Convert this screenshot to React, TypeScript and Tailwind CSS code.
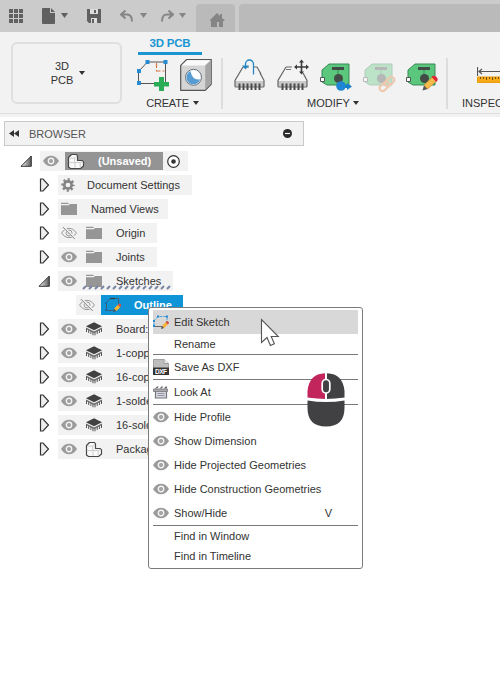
import React from "react";

type IconProps = { className?: string };

function Eye({ className = "" }: IconProps) {
  return (
    <svg className={`h-3 w-4 shrink-0 ${className}`} viewBox="0 0 16 12">
      <path d="M0 6C2 2.500 4.800.8 8 .8S14 2.500 16 6c-2 3.500-4.800 5.200-8 5.200S2 9.500 0 6Z" fill="#9b9b9b" />
      <circle cx="8" cy="6" r="2.700" fill="none" stroke="#f4f4f4" strokeWidth="1.400" />
      <circle cx="8" cy="6" r="1.500" fill="#a5a5a5" />
    </svg>
  );
}

function EyeOff({ className = "" }: IconProps) {
  return (
    <svg className={`h-3.5 w-4 shrink-0 ${className}`} viewBox="0 0 16 14" fill="none" stroke="#9a9a9a">
      <path d="M.6 7C2.600 3.900 5 2.400 8 2.400S13.400 3.900 15.400 7C13.400 10.100 11 11.600 8 11.600S2.600 10.100.6 7Z" />
      <circle cx="8" cy="7" r="3" />
      <circle cx="8" cy="7" r=".8" />
      <path d="m2.500 1 12 12" stroke="#f2f2f2" strokeWidth="2.200" />
      <path d="m1.800 1 12 12" stroke="#858585" />
    </svg>
  );
}

function Folder({ className = "" }: IconProps) {
  return (
    <svg className={`h-[14px] w-4 shrink-0 ${className}`} viewBox="0 0 16 14">
      <path d="M0 1.900V.7h7l1 1.200ZM0 3.200h7.500l1.600-1.300H16V13H0Z" fill="#969696" />
    </svg>
  );
}

function Gear() {
  return (
    <svg className="h-[14px] w-[14px] shrink-0" viewBox="0 0 14 14">
      <circle cx="7" cy="7" r="3.700" fill="none" stroke="#858585" strokeWidth="2.700" />
      <circle cx="7" cy="7" r="5.500" fill="none" stroke="#858585" strokeWidth="2.400" strokeDasharray="2.160 2.160" strokeDashoffset="1.080" />
    </svg>
  );
}

function Cubes() {
  return (
    <svg className="h-[17px] w-[18px] shrink-0" viewBox="0 0 18 17" strokeLinejoin="round">
      <path d="M1.500 4.500 4.500 1.500h5L10.500 3v4.500H15l1.500 1.500v4l-3 2.500h-10l-2-1.500Z" fill="#f9f9f9" stroke="#484848" strokeWidth="1.200" />
      <path d="M2.200 5.200H7.700L9.800 3M7.700 5.200v4.300M2.200 9.500h11M8 9.500v5.300M13.200 9.500v5M13.200 9.500l2.500-1" fill="none" stroke="#cccccc" />
    </svg>
  );
}

function Layers() {
  return (
    <svg className="h-[14px] w-[18px] shrink-0" viewBox="0 0 18 14">
      <path d="M1 4.200 9 .3l8 3.900-8 4Z" fill="#414141" />
      <path d="m1 5.500 8 3.900 8-3.900v1.400l-8 4-8-4Z" fill="#6b6b6b" />
      <path d="M1.500 7v3M3.700 8v3M5.900 9v3M8 10v3.300M10 10v3.300M12.200 9v3M14.400 8v3M16.500 7v3" stroke="#555" fill="none" />
    </svg>
  );
}

function Arrow({ open = false }: { open?: boolean }) {
  return open ? (
    <svg className="h-3 w-3 shrink-0" viewBox="0 0 12 12">
      <defs>
        <linearGradient id="open-arrow" x1="0" x2="1">
          <stop offset=".2" stopColor="#ddd" />
          <stop offset="1" stopColor="#555" />
        </linearGradient>
      </defs>
      <path d="M1 11.300 11.300 1v10.300Z" fill="url(#open-arrow)" stroke="#353535" />
    </svg>
  ) : (
    <svg className="h-[14px] w-[11px] shrink-0" viewBox="0 0 11 14">
      <path d="M1.500 1H4l5.500 6L4 13H1.500Z" fill="#eee" stroke="#333" strokeWidth="1.200" />
    </svg>
  );
}

function Caret({ className = "text-[#333]" }: IconProps) {
  return (
    <svg className={`h-1 w-1.5 shrink-0 ${className}`} viewBox="0 0 6 4">
      <path d="M0 0h6L3 4Z" fill="currentColor" />
    </svg>
  );
}

function SmallPencil({ transform }: { transform?: string }) {
  return (
    <g transform={transform}>
      <path d="m0 10 1.300-4L4 8.700Z" fill="#4d4d58" />
      <path d="m1.300 6 4.400-4.400 2.700 2.700L4 8.700Z" fill="#f5b432" />
      <path d="M5.700 1.600 7.300 0c1.300 0 2.700 1.300 2.700 2.700L8.400 4.300Z" fill="#dc4d3e" />
    </g>
  );
}

function OutlineIcon() {
  return (
    <svg className="h-4 w-4 shrink-0" viewBox="0 0 16 16" fill="none">
      <path d="M1.500 13V5.500l3.500-4h8.500v5M1.500 13.500H8" stroke="#3d6078" />
      <path d="M5 1.500h5" stroke="#353b42" strokeWidth="1.200" />
      <path d="M0 12h2v2H0ZM0 5h2v2H0Z" fill="#146da8" />
      <SmallPencil transform="translate(8 6.500) scale(.85)" />
    </svg>
  );
}

function SketchIcon() {
  return (
    <svg className="h-4 w-4 shrink-0" viewBox="0 0 16 16" fill="none">
      <path d="M1 11.500V6.500l4-4h9v6" stroke="#4c9ed4" strokeDasharray="3 1" />
      <path d="M1 12.500h8" stroke="#666" />
      <path d="M0 11h2v2H0ZM0 6h2v2H0ZM4 1.500h2v2H4ZM13 1.500h2v2h-2Z" fill="#278ccf" />
      <SmallPencil transform="translate(8 7) scale(.8)" />
    </svg>
  );
}

function CreateSketch() {
  return (
    <svg className="h-8 w-8" viewBox="0 0 32 32" fill="none">
      <path d="M1.500 24.500V12.500l9-9.500h18v21.500h-27Z" stroke="#555" />
      <path d="M19.500 4v8h8" stroke="#dc783b" strokeWidth="1.200" strokeDasharray="5 2" />
      <path d="M8.500 1h4v4h-4Zm18 0h4v4h-4ZM0 10h4v4H0Zm0 12h4v4H0Z" fill="#278bd2" />
      <path d="M22 18h5v5h5v4.500h-5v5h-5v-5h-5V23h5Z" fill="#2bad58" />
    </svg>
  );
}

function BoxIcon() {
  return (
    <svg className="h-8 w-8" viewBox="0 0 32 32" strokeLinejoin="round">
      <path d="m.7 6.500 6-6h24.500v24.800l-6 6H.7Z" fill="#d5d5d5" stroke="#555" strokeWidth="1.200" />
      <path d="m1.500 6.500 5.500-5.300h23.500L25 6.500Z" fill="#fafafa" />
      <path d="m25.200 6.500 5.400-5v23.300l-5.400 5.500Z" fill="#a5a5a5" />
      <circle cx="13.500" cy="18.300" r="8" fill="#f8f8f8" stroke="#66717b" />
      <path d="M10.500 12a7 7 0 1 0 9.700 8.200c-5 1.200-8.700-2-9.700-8.200Z" fill="#579dd4" />
      <path d="M11.500 12.200c.5 5.500 4 8.500 8.500 7.700 1-4.700-3-9-8.500-7.700Z" fill="#fff" />
    </svg>
  );
}

function ChipIcon({ move = false }: { move?: boolean }) {
  return (
    <svg className="h-8 w-8" viewBox="0 0 32 32" fill="none">
      <path d="M1 22 8.500 8h14L30 22v4H1Z" fill="#f4f4f4" />
      <path d="M1 22h29v5.500H1Z" fill="#c9c9c9" />
      <path d="M9 8 1 21.500v5.500q0 1 1 1h27q1 0 1-1v-5.500L26 14M9 8h6" stroke="#666" strokeWidth="1.200" />
      {!move && <path d="M20 8h3l4 7" stroke="#666" strokeWidth="1.200" />}
      <path d="M5.500 24.500V31m4-6.500V31m4-6.500V31m4-6.500V31m4-6.500V31m4-6.500V31" stroke="#4b4b4b" strokeWidth="2" />
      {move ? (
        <>
          <path d="M9 10.500h5" stroke="#777" />
          <path d="M24.500 2v12M18.500 8h12" stroke="#3b3b3b" strokeWidth="1.600" />
          <path d="m22 3.500 2.500-3 2.500 3Zm0 9 2.500 3 2.500-3ZM20 5.500 17 8l3 2.500Zm9 0L32 8l-3 2.500Z" fill="#3b3b3b" />
        </>
      ) : (
        <>
          <path d="M19.500 15.500V5a4 4 0 0 0-8 0v3" stroke="#2586c4" strokeWidth="1.300" />
          <path d="m8 6.500 3.500 4 3.500-4Z" fill="#2586c4" />
        </>
      )}
    </svg>
  );
}

function BoardIcon({ mode }: { mode: "move" | "link" | "edit" }) {
  return (
    <svg className={`h-8 w-8 overflow-visible ${mode === "link" ? "opacity-35" : ""}`} viewBox="0 0 32 32" fill="none">
      <path d="M2 23V11l7-6h20v21H7l-5-3Z" fill="#5bc77d" stroke="#398957" />
      <path d="M12 8h12v3H12Z" fill="#434b46" />
      <path d="M18 11v6" stroke="#398957" />
      <circle cx="18.500" cy="19.500" r="4.500" fill="#434b46" />
      <path d="M.5 18.500h4v4h-4Z" fill="#fff" stroke="#555" />
      {mode === "move" && (
        <>
          <path d="M22 27.500h6" stroke="#187fc9" strokeWidth="3" />
          <circle cx="21" cy="27" r="4.800" fill="#1e86d3" />
          <path d="M27 24 32 27.500 27 31Z" fill="#187fc9" />
        </>
      )}
      {mode === "edit" && (
        <>
          <path d="m16.500 31.500 1.500-5.300 3.700 3.800Z" fill="#53535b" />
          <path d="m18 26.200 8.500-8.300 3.900 4L21.700 30Z" fill="#f4ba4a" stroke="#cb852c" strokeWidth=".7" />
          <path d="M26.500 17.900c1.500-2 5.800 1.800 3.900 4Z" fill="#df2738" stroke="#df2738" strokeWidth="1.400" />
        </>
      )}
      {mode === "link" && (
        <g transform="rotate(-43 24 25)" stroke="#e87830" strokeWidth="2">
          <rect x="15" y="22" width="11" height="6" rx="3" />
          <rect x="22" y="22" width="11" height="6" rx="3" />
        </g>
      )}
    </svg>
  );
}

function DxfIcon() {
  return (
    <svg className="h-4 w-4 shrink-0" viewBox="0 0 16 16">
      <path d="M.5.500h10.500l4.500 4V11H.5Z" fill="#bdbdbd" stroke="#888" strokeWidth=".7" />
      <path d="M11 .5v4h4.500" fill="#eee" stroke="#888" strokeWidth=".7" />
      <path d="M0 8.500h16V16H0Z" fill="#343434" />
      <text x="8" y="14.700" fill="white" textAnchor="middle" fontFamily="Liberation Sans" fontSize="6.500" fontWeight="bold" textLength="12">DXF</text>
    </svg>
  );
}

function LookIcon() {
  return (
    <svg className="h-4 w-4 shrink-0" viewBox="0 0 16 16" fill="none">
      <path d="M2.500 6h11v8h-11Z" fill="#d8d8e1" stroke="#74747c" strokeWidth="1.200" />
      <path d="M.5 5h14v2.500H.5Z" fill="#a7a7af" stroke="#777" strokeWidth=".8" />
      <path d="M4.500 9.500h7M4.500 11.500h7" stroke="#9393a0" />
      <path d="M2 4.500 4 2.500h2L4 4.500Zm4.500 0 2-2h2l-2 2Zm4.500 0 1.500-2H14v2Z" fill="#66666e" />
    </svg>
  );
}

function TopBar() {
  return (
    <div className="flex h-8 bg-[#cbcbcb] text-[#606060]">
      <svg className="mt-2 ml-[9px] h-4 w-[14px] shrink-0" viewBox="0 0 14 16">
        <path d="M0 1h4v4H0Zm5 0h4v4H5Zm5 0h4v4h-4ZM0 6h4v4H0Zm5 0h4v4H5Zm5 0h4v4h-4ZM0 11h4v4H0Zm5 0h4v4H5Zm5 0h4v4h-4Z" fill="currentColor" />
      </svg>
      <svg className="mt-2 ml-[19px] h-4 w-[13px] shrink-0" viewBox="0 0 13 16">
        <path d="M0 1Q0 0 1 0h7v5h5v10q0 1-1 1H1q-1 0-1-1ZM9 0l4 4H9Z" fill="currentColor" />
      </svg>
      <svg className="mt-[13px] ml-[6px] h-[5px] w-[7px]" viewBox="0 0 7 5"><path d="M0 0h7L3.500 5Z" fill="currentColor" /></svg>
      <svg className="mt-[9px] ml-[19px] h-[14px] w-[14px]" viewBox="0 0 14 14">
        <path d="M0 0h14v14H2l-2-2Z" fill="currentColor" />
        <path d="M3 0h8v5H3Zm1 9h6v5H4Z" fill="#ddd" />
        <path d="M7 1h2v3H7ZM5 10h2v4H5Z" fill="currentColor" />
      </svg>
      <svg className="mt-[10px] ml-[19px] h-3 w-[14px] text-[#858585]" viewBox="0 0 14 12" fill="none" stroke="currentColor" strokeWidth="1.900">
        <path d="M5.500 .5 1 4.500l4.500 4M1.500 4.500H7q5 0 5 7" />
      </svg>
      <svg className="mt-[13px] ml-[6px] h-[5px] w-[7px] text-[#858585]" viewBox="0 0 7 5"><path d="M0 0h7L3.500 5Z" fill="currentColor" /></svg>
      <svg className="mt-[10px] ml-[13px] h-3 w-[14px] text-[#858585]" viewBox="0 0 14 12" fill="none" stroke="currentColor" strokeWidth="1.900">
        <path d="m8.500 .5 4.500 4-4.500 4M12.500 4.500H7q-5 0-5 7" />
      </svg>
      <svg className="mt-[13px] ml-[5px] h-[5px] w-[7px] text-[#858585]" viewBox="0 0 7 5"><path d="M0 0h7L3.500 5Z" fill="currentColor" /></svg>
      <div className="mt-1 ml-[10px] flex w-[39px] shrink-0 justify-center rounded-t bg-[#bababa] pt-[9px] pl-[3px]">
        <svg className="h-[14px] w-4" viewBox="0 0 16 14">
          <path d="M1 7 8 0l3 3V1h2v4l2.500 2v1H14v6h-4V9H8v5H2V8H1Z" fill="#858585" />
        </svg>
      </div>
      <div className="mt-1 ml-1 grow rounded-tl bg-[#bababa]" />
    </div>
  );
}

function Ribbon() {
  return (
    <div className="h-[85px] overflow-hidden bg-[#f2f2f2]">
      <div className="flex h-[82px] border-b border-[#dedede]">
        <div className="mt-[10px] ml-[11px] flex h-[62px] w-[111px] shrink-0 items-center justify-center gap-[6px] rounded-md border-2 border-[#dfdfdf] pl-[3px]">
          <div className="text-center text-[11px] leading-[14px]">3D<br />PCB</div>
          <Caret />
        </div>
        <div className="ml-[15px] w-[76px] shrink-0">
          <div className="ml-px h-[23px] w-16 border-b-[3px] border-[#1b96d2] pt-[3px] text-center text-[11.5px] font-bold leading-4 tracking-[-.2px] text-[#1b96d2]">3D PCB</div>
          <div className="mt-1 flex h-8 gap-[11px]">
            <CreateSketch /><BoxIcon />
          </div>
          <div className="mt-1 flex items-center justify-center gap-1 pr-[5px] text-[11px] leading-4 tracking-[-.2px]"><span>CREATE</span><Caret /></div>
        </div>
        <div className="mt-[26px] ml-[8px] h-[51px] w-0.5 shrink-0 bg-[#dddddd]" />
        <div className="mt-[27px] ml-[11px] w-[206px] shrink-0">
          <div className="flex h-8 gap-[11px]">
            <ChipIcon /><ChipIcon move /><BoardIcon mode="move" /><BoardIcon mode="link" /><BoardIcon mode="edit" />
          </div>
          <div className="mt-1 ml-[73px] flex items-center gap-[3px] text-[11px] leading-4"><span>MODIFY</span><Caret /></div>
        </div>
        <div className="mt-[26px] ml-[6px] h-[51px] w-0.5 shrink-0 bg-[#dddddd]" />
        <div className="mt-[34px] ml-[14px] w-[60px] shrink-0">
          <svg className="ml-[15px] h-[18px] w-10" viewBox="0 0 40 18" fill="none">
            <path d="M.5 1v9M2 5.500h38M5 3 2 5.500 5 8" stroke="#555" strokeWidth="1.200" />
            <path d="M.5 11h39v5.500H.5Z" fill="#f7aa18" stroke="#ed9e0a" />
            <path d="M3.500 11v2m3-2v2m3-2v3m3-3v2m3-2v3m3-3v2m3-2v2" stroke="#765316" />
          </svg>
          <div className="mt-[11px] text-[11px] leading-4">INSPECT</div>
        </div>
      </div>
    </div>
  );
}

type Node = { label: string; icon: React.ReactNode; box: string; hidden?: boolean };

function TreeRow({ label, icon, box, hidden, open = false }: Node & { open?: boolean }) {
  return (
    <div className="flex h-5 items-center">
      <div className={`flex shrink-0 items-center ${open ? "ml-[38px] w-5" : "ml-[39px] w-[19px]"}`}><Arrow open={open} /></div>
      <div className={`flex h-5 shrink-0 items-center overflow-hidden bg-[#f2f2f2] ${box}`}>
        {hidden ? <EyeOff className="ml-[3px]" /> : <Eye className="ml-[3px]" />}
        <div className="ml-[8px] flex w-[18px] shrink-0 justify-center">{icon}</div>
        <span className="ml-[13px]">{label}</span>
      </div>
    </div>
  );
}

function Browser() {
  const folders: Node[] = [
    { label: "Origin", icon: <Folder />, box: "w-[99px]", hidden: true },
    { label: "Joints", icon: <Folder />, box: "w-[99px]" },
  ];
  const layers = ["Board:1", "1-copper", "16-copper", "1-solder", "16-solder"];
  return (
    <div className="pt-1">
      <div className="ml-1 flex h-[25px] w-[300px] items-center border border-[#c9c9c9] bg-[#f2f2f2] text-[#555]">
        <svg className="ml-1 h-[7px] w-[10px]" viewBox="0 0 10 7"><path d="M0 3.500 5 0v7Zm5 0L10 0v7Z" fill="#333" /></svg>
        <span className="ml-[10px]">BROWSER</span>
        <svg className="mr-[11px] ml-auto h-[9px] w-[9px]" viewBox="0 0 9 9"><circle cx="4.500" cy="4.500" r="4.500" fill="#292929" /><path d="M2 4.500h5" stroke="white" strokeWidth="1.200" /></svg>
      </div>
      <div className="mt-[5px] flex flex-col gap-1 whitespace-nowrap">
        <div className="flex h-5 items-center">
          <div className="ml-[20px] w-5"><Arrow open /></div>
          <div className="flex h-5 w-[148px] items-center bg-[#f2f2f2]">
            <Eye className="ml-[3px]" />
            <div className="ml-[6px] flex h-[18px] w-[98px] shrink-0 items-center bg-[#949494] pl-0.5 font-bold text-white"><Cubes /><span className="ml-[13px]">(Unsaved)</span></div>
            <svg className="ml-1 h-[13px] w-[13px] shrink-0" viewBox="0 0 13 13"><circle cx="6.500" cy="6.500" r="5.800" fill="#fff" stroke="#333" strokeWidth="1.200" /><circle cx="6.500" cy="6.500" r="2.300" fill="#333" /></svg>
          </div>
        </div>
        <div className="flex h-5 items-center">
          <div className="ml-[39px] w-[19px]"><Arrow /></div>
          <div className="flex h-5 w-[134px] items-center bg-[#f2f2f2] pl-[3px]"><Gear /><span className="ml-3">Document Settings</span></div>
        </div>
        <div className="flex h-5 items-center">
          <div className="ml-[39px] w-[19px]"><Arrow /></div>
          <div className="flex h-5 w-[110px] items-center bg-[#f2f2f2] pl-[3px]"><Folder /><span className="ml-[14px]">Named Views</span></div>
        </div>
        {folders.map((node) => <TreeRow key={node.label} {...node} />)}
        <div className="relative">
          <TreeRow label="Sketches" icon={<Folder />} box="w-[115px]" open />
          <svg className="absolute top-[14px] left-[82px] h-[5px] w-[91px]" viewBox="0 0 91 5">
            <path d="m1 4 3-3m3 3 3-3m3 3 3-3m3 3 3-3m3 3 3-3m3 3 3-3m3 3 3-3m3 3 3-3m3 3 3-3m3 3 3-3m3 3 3-3m3 3 3-3m3 3 3-3m3 3 3-3m3 3 3-3" fill="none" stroke="#7b84a3" strokeWidth="2" />
          </svg>
        </div>
        <div className="flex h-5 items-center">
          <div className="ml-[76px] flex h-5 items-center bg-[#f2f2f2]">
            <EyeOff className="ml-[3px]" />
            <div className="ml-[6px] flex h-5 w-[82px] items-center bg-[#0f94d8] pl-1 font-bold text-white"><OutlineIcon /><span className="ml-[13px]">Outline</span></div>
          </div>
        </div>
        {layers.map((label) => <TreeRow key={label} label={label} icon={<Layers />} box="w-[91px]" />)}
        <TreeRow label="Package" icon={<Cubes />} box="w-[91px]" />
      </div>
    </div>
  );
}

function MenuItem({ label, icon, hint, active = false, short = false }: { label: string; icon?: React.ReactNode; hint?: string; active?: boolean; short?: boolean }) {
  return (
    <div className={`flex items-center ${short ? "h-5" : "h-6"} ${active ? "bg-[#d8d8d8]" : ""}`}>
      <div className="flex w-[21px] shrink-0">{icon}</div>
      <span>{label}</span>
      {hint && <span className="mr-[26px] ml-auto">{hint}</span>}
    </div>
  );
}

function ContextMenu() {
  const rule = <div className="h-px bg-[#797979]" />;
  return (
    <div className="absolute top-[307px] left-[148px] h-[262px] w-[215px] rounded-[3px] border border-[#7b7b7b] bg-white px-1 py-0.5 whitespace-nowrap">
      <MenuItem label="Edit Sketch" icon={<SketchIcon />} active />
      <MenuItem label="Rename" short />
      {rule}
      <MenuItem label="Save As DXF" icon={<DxfIcon />} />
      {rule}
      <MenuItem label="Look At" icon={<LookIcon />} />
      {rule}
      <MenuItem label="Hide Profile" icon={<Eye />} />
      <MenuItem label="Show Dimension" icon={<Eye />} />
      <MenuItem label="Hide Projected Geometries" icon={<Eye />} />
      <MenuItem label="Hide Construction Geometries" icon={<Eye />} />
      <MenuItem label="Show/Hide" icon={<Eye />} hint="V" />
      {rule}
      <MenuItem label="Find in Window" short />
      <MenuItem label="Find in Timeline" short />
    </div>
  );
}

export default function App() {
  return (
    <div className="relative h-[700px] w-[500px] overflow-hidden bg-white font-['Liberation_Sans',Arial,sans-serif] text-[11px] leading-4 text-[#333]">
      <TopBar />
      <Ribbon />
      <Browser />
      <ContextMenu />
      <svg className="absolute top-[318px] left-[260px] h-[30px] w-5" viewBox="0 0 20 30">
        <path d="M1.500 1.500v23l5.500-5 3.400 8 4-1.800-3.200-7.200h7.100Z" fill="white" stroke="#555" strokeWidth="1.100" />
      </svg>
      <svg className="absolute top-[373px] left-[307px] h-[54px] w-[38px]" viewBox="0 0 38 54">
        <path d="M.5 25V18Q2 1 18 .3v26.200Q8 26.300.5 25Z" fill="#c2255c" />
        <path d="M20 .3Q36 1 37.500 18v7Q30 26.300 20 26.500Z" fill="#414143" />
        <path d="M.5 27.500q18.500 3 37 0V35q0 18.500-18.500 18.500T.5 35Z" fill="#414143" />
        <path d="M0 25.500q19 3 38 0" fill="none" stroke="white" strokeWidth="2" />
        <rect x="15.200" y="6.500" width="7.600" height="13.500" rx="3.800" fill="#414143" stroke="white" strokeWidth="1.700" />
      </svg>
    </div>
  );
}
